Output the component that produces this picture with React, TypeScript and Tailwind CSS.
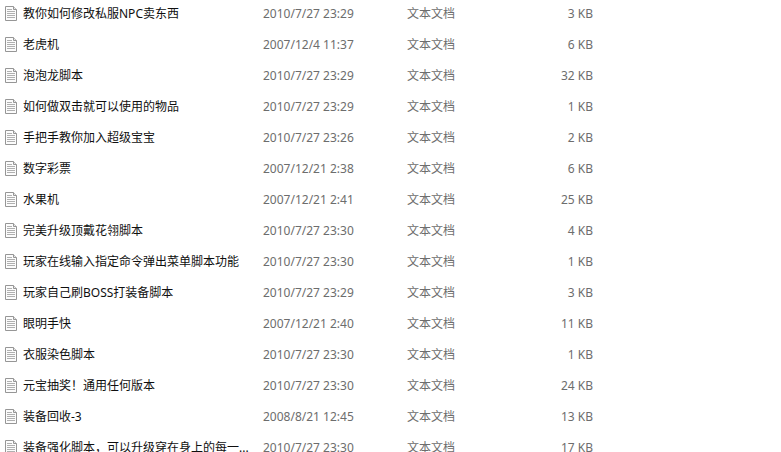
const files = [
  { name: "教你如何修改私服NPC卖东西", date: "2010/7/27 23:29", size: "3 KB" },
  { name: "老虎机", date: "2007/12/4 11:37", size: "6 KB" },
  { name: "泡泡龙脚本", date: "2010/7/27 23:29", size: "32 KB" },
  { name: "如何做双击就可以使用的物品", date: "2010/7/27 23:29", size: "1 KB" },
  { name: "手把手教你加入超级宝宝", date: "2010/7/27 23:26", size: "2 KB" },
  { name: "数字彩票", date: "2007/12/21 2:38", size: "6 KB" },
  { name: "水果机", date: "2007/12/21 2:41", size: "25 KB" },
  { name: "完美升级顶戴花翎脚本", date: "2010/7/27 23:30", size: "4 KB" },
  { name: "玩家在线输入指定命令弹出菜单脚本功能", date: "2010/7/27 23:30", size: "1 KB" },
  { name: "玩家自己刷BOSS打装备脚本", date: "2010/7/27 23:29", size: "3 KB" },
  { name: "眼明手快", date: "2007/12/21 2:40", size: "11 KB" },
  { name: "衣服染色脚本", date: "2010/7/27 23:30", size: "1 KB" },
  { name: "元宝抽奖！通用任何版本", date: "2010/7/27 23:30", size: "24 KB" },
  { name: "装备回收-3", date: "2008/8/21 12:45", size: "13 KB" },
  { name: "装备强化脚本，可以升级穿在身上的每一...", date: "2010/7/27 23:30", size: "17 KB" },
];

function TextFileIcon() {
  return (
    <svg width="12" height="15" viewBox="0 0 12 15" className="shrink-0">
      <path d="M0.5 0.5H8.5L11.5 3.5V14.5H0.5Z" fill="#fcfcfc" stroke="#969696" />
      <path d="M8.5 0.5V3.5H11.5" fill="#e8e8e8" stroke="#969696" />
      <path
        d="M2 3.5H7M2 5.5H10M2 7.5H10M2 9.5H10M2 11.5H10"
        stroke="#b0b0b0"
        fill="none"
      />
    </svg>
  );
}

export default function App() {
  return (
    <div className="h-[452px] w-[781px] overflow-hidden bg-white font-['Noto_Sans','Noto_Sans_CJK_SC',sans-serif] text-[12px]">
      <div className="-mt-[2px] flex flex-col">
        {files.map((file) => (
          <div key={file.name} className="flex h-[31px] shrink-0 items-center pl-[5px]">
            <TextFileIcon />
            <div className="ml-[6px] w-[240px] truncate text-[#0f0f0f]">{file.name}</div>
            <div className="w-[144px] text-[#6d6d6d]">{file.date}</div>
            <div className="w-[80px] text-[#6d6d6d]">文本文档</div>
            <div className="w-[106px] text-right text-[#6d6d6d]">{file.size}</div>
          </div>
        ))}
      </div>
    </div>
  );
}
